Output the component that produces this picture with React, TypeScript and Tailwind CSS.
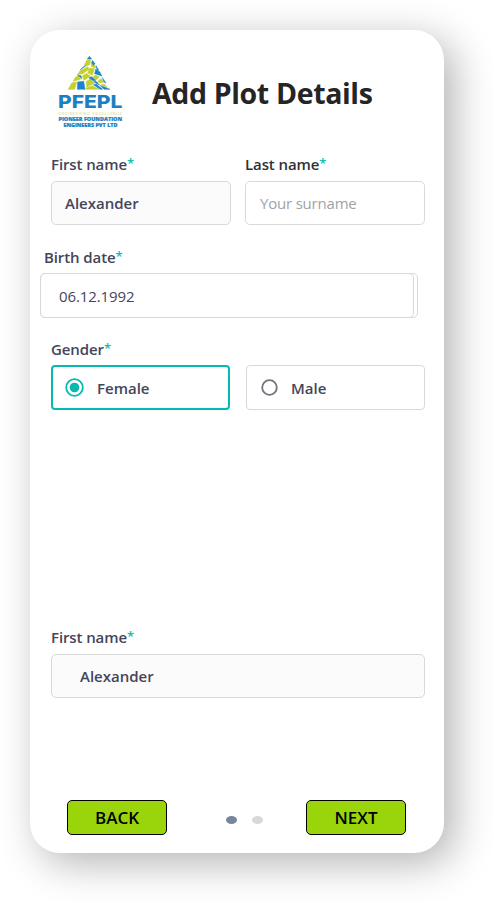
import type { ReactNode } from "react";

function Logo() {
  return (
    <svg className="mt-[25px] ml-[25px] h-[76px] w-[70px] shrink-0" viewBox="55 55 70 76" aria-label="PFEPL">
      <g transform="translate(50 50) scale(.33333)" fill="#c3d02e" stroke="#c3d02e" strokeWidth="1.6">
        <polygon points="110,31 122,29 118,45 101,50" />
        <polygon points="122,37 129,37 138,54 125,50" />
        <polygon points="90,62 113,50 117,58 98,72 84,72" />
        <polygon points="119,54 133,56 127,76 113,68" />
        <polygon points="77,81 86,77 92,88 69,94" />
        <polygon points="97,78 110,70 121,79 102,91" />
        <polygon points="137,75 148,81 140,89 128,81" />
        <polygon points="65,99 80,96 74,118 55,118" />
        <polygon points="109,94 121,87 134,99 110,111" />
        <polygon points="143,93 154,86 161,97 149,99" />
        <polygon points="108,114 126,107 148,118 108,118" />
        <polygon points="163,102 171,112 153,104" />
        <g fill="#1c84c8" stroke="#1c84c8">
          <polygon points="118,19 125,27 112,27" />
          <polygon points="127,31 135,41 130,46 126,38" />
          <polygon points="97,53 106,48 101,52 91,59" />
          <polygon points="138,47 146,60 142,62" />
          <polygon points="82,74 93,77 95,86 89,80" />
          <polygon points="137,58 149,65 156,78 134,71" />
          <polygon points="124,80 138,91 128,91 117,84" />
          <polygon points="83,96 101,94 105,118 82,118" />
          <polygon points="130,91 141,96 148,105 136,99" />
          <polygon points="130,104 139,103 158,118 151,118" />
          <polygon points="150,106 170,114 180,118 162,118" />
          <polygon points="157,83 168,99 162,96" />
        </g>
      </g>
      <g fill="#1c7fc0" fontFamily="Inter, 'Open Sans', sans-serif">
        <text x="58" y="108" fontSize="18" fontWeight="800" textLength="64.5" lengthAdjust="spacingAndGlyphs">PFEPL</text>
        <text x="58.5" y="115" fontSize="3.6" fontWeight="400" fill="#cbd584" textLength="63.5">ENGINEERING EXCELLENCE</text>
        <g fontFamily="'Open Sans', sans-serif" fontWeight="800" fontSize="5" stroke="#1c7fc0" strokeWidth=".2">
          <text x="58.5" y="121.3" textLength="63.5" lengthAdjust="spacingAndGlyphs">PIONEER FOUNDATION</text>
          <text x="63.5" y="127.3" textLength="54" lengthAdjust="spacingAndGlyphs">ENGINEERS PVT LTD</text>
        </g>
      </g>
    </svg>
  );
}

function Label({ children, dark = false }: { children: ReactNode; dark?: boolean }) {
  return (
    <div className={`flex h-6 items-center text-[15px] font-semibold tracking-[-0.1px] whitespace-nowrap ${dark ? "text-[#303036]" : "text-[#45455a]"}`}>
      {children}
      <span className="text-[13px] text-[#0bbdb6]">*</span>
    </div>
  );
}

const box = "flex h-11 items-center rounded-[5px] border border-[#d9d9d9]";

export default function App() {
  return (
    <div className="h-[903px] w-[494px] overflow-hidden bg-white p-[30px] font-['Open_Sans','Noto_Sans',sans-serif] text-[15px] text-[#45455a]">
      <main className="flex h-[823px] w-[414px] flex-col rounded-[30px] bg-white shadow-[10px_10px_40px_rgba(0,0,0,0.3)]">
        <header className="flex h-[122px]">
          <Logo />
          <h1 className="mt-[42px] ml-[27px] text-[28.5px] leading-[42px] font-bold tracking-[-0.36px] whitespace-nowrap text-[#252525]">Add Plot Details</h1>
        </header>

        <section className="flex gap-[14px] pl-[21px]">
          <div className="w-[180px]">
            <Label>First name</Label>
            <div className={`${box} mt-[5px] bg-[#fbfbfb] pl-[13px] font-semibold`}>Alexander</div>
          </div>
          <div className="w-[180px]">
            <Label dark>Last name</Label>
            <div className={`${box} mt-[5px] pl-[14px] tracking-[-0.2px] text-[#a2a2aa]`}>Your surname</div>
          </div>
        </section>

        <section className="mt-[20px] pl-[10px]">
          <div className="pl-1"><Label>Birth date</Label></div>
          <div className="mt-[4px] h-[45px] w-[378px] rounded-[5px] border border-[#d9d9d9]">
            <div className="-mt-px -ml-px flex h-[45px] w-[374px] items-center rounded-[5px] border border-[#d9d9d9] pt-px pl-[18px] tracking-[-0.1px]">06.12.1992</div>
          </div>
        </section>

        <section className="mt-[19px] pl-[21px]">
          <Label>Gender</Label>
          <div className="mt-[4px] flex gap-[16px] font-semibold">
            <div className="flex h-[45px] w-[179px] items-center rounded-[4px] border-2 border-[#06b9b2] pl-[12px]">
              <svg className="h-[19px] w-[19px]" viewBox="0 0 19 19">
                <circle cx="9.5" cy="9.5" r="8.3" fill="none" stroke="#06b9b2" strokeWidth="1.8" />
                <circle cx="9.5" cy="9.5" r="4.8" fill="#06b9b2" />
              </svg>
              <span className="mt-px ml-[13px]">Female</span>
            </div>
            <div className="flex h-[45px] w-[179px] items-center rounded-[4px] border border-[#d9d9d9] pl-[13.5px]">
              <svg className="h-[17px] w-[17px]" viewBox="0 0 17 17">
                <circle cx="8.5" cy="8.5" r="7.3" fill="none" stroke="#73737f" strokeWidth="1.8" />
              </svg>
              <span className="mt-px ml-[13.5px]">Male</span>
            </div>
          </div>
        </section>

        <section className="mt-[215px] pl-[21px]">
          <Label>First name</Label>
          <div className={`${box} mt-[5px] w-[374px] bg-[#fbfbfb] pl-[28px] font-semibold`}>Alexander</div>
        </section>

        <footer className="mt-[102px] flex items-start pl-[37px] text-[17px] font-semibold text-black">
          <button className="h-[35px] w-[100px] rounded-[5px] border border-black bg-[#99d50a]">BACK</button>
          <div className="mt-4 flex w-[139px] gap-[15px] pl-[58.5px]">
            <span className="h-2 w-[11px] rounded-[50%] bg-[#76869d]" />
            <span className="h-2 w-[11px] rounded-[50%] bg-[#d8d8d8]" />
          </div>
          <button className="h-[35px] w-[100px] rounded-[5px] border border-black bg-[#99d50a]">NEXT</button>
        </footer>
      </main>
    </div>
  );
}
